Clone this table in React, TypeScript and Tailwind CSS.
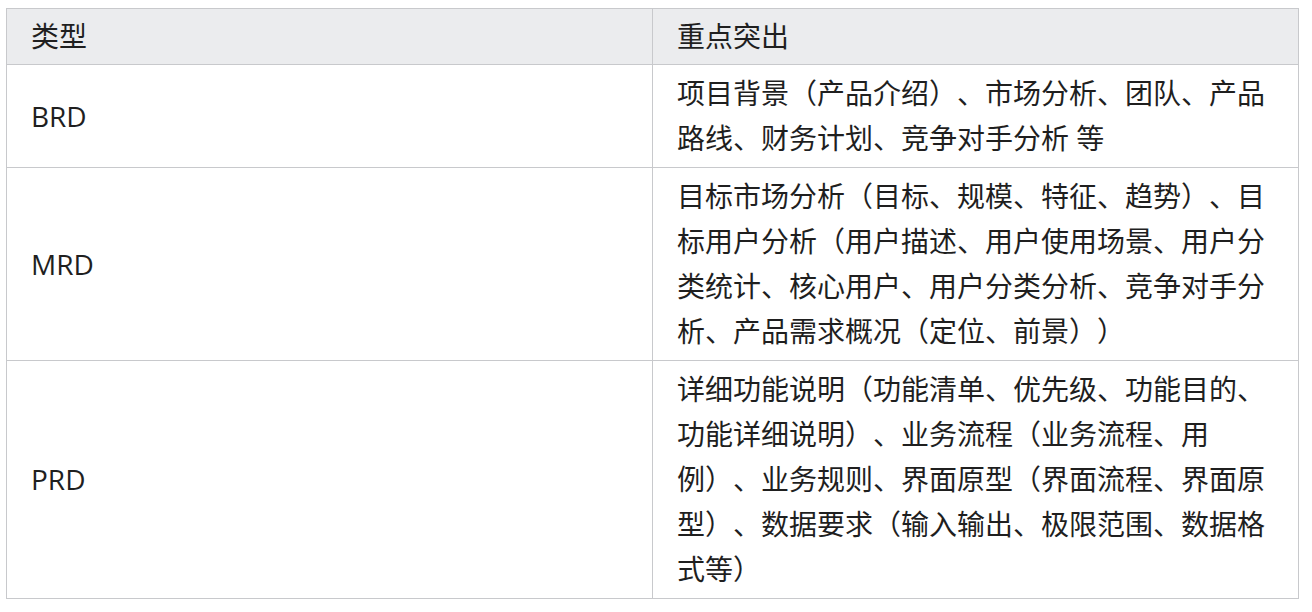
import React from "react";

const rows: { type: string; text: string }[] = [
  { type: "BRD", text: "项目背景（产品介绍）、市场分析、团队、产品路线、财务计划、竞争对手分析 等" },
  {
    type: "MRD",
    text: "目标市场分析（目标、规模、特征、趋势）、目标用户分析（用户描述、用户使用场景、用户分类统计、核心用户、用户分类分析、竞争对手分析、产品需求概况（定位、前景））",
  },
  {
    type: "PRD",
    text: "详细功能说明（功能清单、优先级、功能目的、功能详细说明）、业务流程（业务流程、用例）、业务规则、界面原型（界面流程、界面原型）、数据要求（输入输出、极限范围、数据格式等）",
  },
];

export default function App() {
  return (
    <div
      className="w-[1312px] h-[612px] bg-white pl-[6px] pt-[8px] text-[#1f1f1f] [text-spacing-trim:space-all] [font-feature-settings:'halt'_0,'chws'_0]"
      style={{ fontFamily: '"Open Sans", "Noto Sans CJK SC", sans-serif' }}
    >
      <table className="w-[1293px] border-collapse table-fixed text-[28px] leading-[45px]">
        <colgroup>
          <col className="w-[646px]" />
          <col />
        </colgroup>
        <thead>
          <tr className="bg-[#ebecee]">
            <th className="border border-[#c8c9cc] px-[24px] py-[5px] text-left font-normal align-middle">类型</th>
            <th className="border border-[#c8c9cc] px-[24px] py-[5px] text-left font-normal align-middle">重点突出</th>
          </tr>
        </thead>
        <tbody>
          {rows.map((r) => (
            <tr key={r.type}>
              <td className="border border-[#c8c9cc] px-[24px] py-[6px] align-middle">{r.type}</td>
              <td className="border border-[#c8c9cc] px-[24px] py-[6px] align-middle">{r.text}</td>
            </tr>
          ))}
        </tbody>
      </table>
    </div>
  );
}
